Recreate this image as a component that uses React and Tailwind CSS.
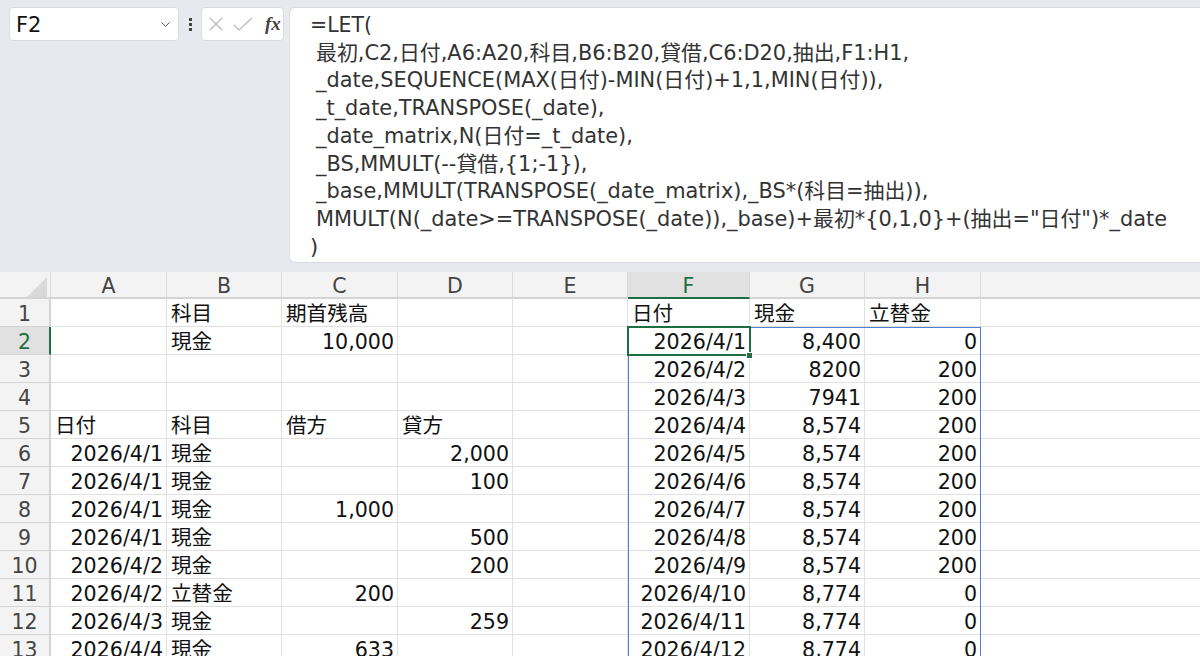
import { ChevronDown } from "lucide-react";

const font = "font-['DejaVu_Sans','Noto_Sans_CJK_JP',sans-serif]";
const columns = ["A", "B", "C", "D", "E", "F", "G", "H"];

const formula = [
  "最初,C2,日付,A6:A20,科目,B6:B20,貸借,C6:D20,抽出,F1:H1,",
  "_date,SEQUENCE(MAX(日付)-MIN(日付)+1,1,MIN(日付)),",
  "_t_date,TRANSPOSE(_date),",
  "_date_matrix,N(日付=_t_date),",
  "_BS,MMULT(--貸借,{1;-1}),",
  "_base,MMULT(TRANSPOSE(_date_matrix),_BS*(科目=抽出)),",
  "MMULT(N(_date>=TRANSPOSE(_date)),_base)+最初*{0,1,0}+(抽出=\"日付\")*_date",
];

// cell = text, or [text] when it is right aligned
const rows = [
  ["", "科目", "期首残高", "", "", "日付", "現金", "立替金"],
  ["", "現金", ["10,000"], "", "", ["2026/4/1"], ["8,400"], ["0"]],
  ["", "", "", "", "", ["2026/4/2"], ["8200"], ["200"]],
  ["", "", "", "", "", ["2026/4/3"], ["7941"], ["200"]],
  ["日付", "科目", "借方", "貸方", "", ["2026/4/4"], ["8,574"], ["200"]],
  [["2026/4/1"], "現金", "", ["2,000"], "", ["2026/4/5"], ["8,574"], ["200"]],
  [["2026/4/1"], "現金", "", ["100"], "", ["2026/4/6"], ["8,574"], ["200"]],
  [["2026/4/1"], "現金", ["1,000"], "", "", ["2026/4/7"], ["8,574"], ["200"]],
  [["2026/4/1"], "現金", "", ["500"], "", ["2026/4/8"], ["8,574"], ["200"]],
  [["2026/4/2"], "現金", "", ["200"], "", ["2026/4/9"], ["8,574"], ["200"]],
  [["2026/4/2"], "立替金", ["200"], "", "", ["2026/4/10"], ["8,774"], ["0"]],
  [["2026/4/3"], "現金", "", ["259"], "", ["2026/4/11"], ["8,774"], ["0"]],
  [["2026/4/4"], "現金", ["633"], "", "", ["2026/4/12"], ["8,774"], ["0"]],
];

const grid = "grid grid-cols-[51px_116px_115px_116px_115px_115px_122px_115px_116px_1fr]";

function Cell({ value }) {
  const right = Array.isArray(value);
  return (
    <div
      className={`h-[28px] border-r border-b border-[#e1e1e1] overflow-hidden whitespace-nowrap text-[20.6px] leading-[31px] text-[#111] ${
        right ? "text-right pr-[3px]" : "pl-[4px]"
      }`}
    >
      {right ? value[0] : value}
    </div>
  );
}

export default function App() {
  return (
    <div className={`${font} h-[656px] w-[1200px] overflow-hidden bg-white`}>
      {/* formula bar */}
      <div className="flex h-[272px] bg-[#e6eaee] pl-[9px] pt-[7px] items-start">
        <div className="flex items-center justify-between h-[34px] w-[170px] bg-white rounded-[4px] border border-[#d9dde1] pl-[6px] pr-[5px] text-[21px] text-[#111]">
          <span className="pt-[3px]">F2</span>
          <ChevronDown size={15} strokeWidth={1.5} className="text-[#444]" />
        </div>
        <div className="flex flex-col gap-[2px] w-[22px] items-center pt-[11px]">
          <span className="w-[3px] h-[3px] bg-[#444]" />
          <span className="w-[3px] h-[3px] bg-[#444]" />
          <span className="w-[3px] h-[3px] bg-[#444]" />
        </div>
        <div className="flex items-center h-[34px] w-[83px] bg-white rounded-[4px] border border-[#d9dde1] pl-[6px] gap-[9px]">
          <svg width="16" height="16" viewBox="0 0 16 16" fill="none" stroke="#b8b8b8" strokeWidth="1.2" className="shrink-0">
            <path d="M2 2l12 12M14 2L2 14" />
          </svg>
          <svg width="20" height="16" viewBox="0 0 20 16" fill="none" stroke="#b8b8b8" strokeWidth="1.2" className="shrink-0">
            <path d="M1 9l5 5L19 2" />
          </svg>
          <span className="font-['Liberation_Serif',serif] italic font-bold text-[19px] leading-none text-[#444] ml-[3px] -mt-[1px]">fx</span>
        </div>
        <div className="ml-[5px] h-[256px] flex-1 bg-white rounded-l-[6px] border border-r-0 border-[#d9dde1] pl-[20px] pt-[4px] text-[20.9px] leading-[27.7px] text-[#333] whitespace-nowrap">
          <div className="text-[20.5px]">=LET(</div>
          {formula.map((line) => (
            <div key={line} className="pl-[6px]">{line}</div>
          ))}
          <div>)</div>
        </div>
      </div>

      {/* sheet */}
      <div className="relative">
        <div className={`${grid} h-[27px] bg-[#f3f3f3] border-b-2 border-[#d2d4d6]`}>
          <div className="relative border-r border-[#d9d9d9]">
            <div className="absolute right-[3px] bottom-[3px] w-0 h-0 border-l-[20px] border-b-[20px] border-l-transparent border-b-[#d9d9d9]" />
          </div>
          {columns.map((c) => (
            <div
              key={c}
              className={`text-center text-[20.5px] leading-[28px] border-r border-[#d9d9d9] ${
                c === "F" ? "bg-[#e1e1e1] text-[#1d6f42] border-b-2 border-b-[#1d6f42] h-[27px]" : "text-[#444]"
              }`}
            >
              {c}
            </div>
          ))}
          <div />
        </div>

        {rows.map((row, r) => (
          <div key={r} className={grid}>
            <div
              className={`h-[28px] text-center text-[20.5px] leading-[31px] border-r-2 border-b border-[#d2d4d6] ${
                r === 1 ? "bg-[#e1e1e1] text-[#1d6f42] border-r-[#1d6f42]" : "bg-[#f3f3f3] text-[#444]"
              }`}
            >
              {r + 1}
            </div>
            {row.map((v, c) => (
              <Cell key={c} value={v} />
            ))}
            <div className="h-[28px] border-b border-[#e1e1e1]" />
          </div>
        ))}

        {/* selected range and active cell */}
        <div className="absolute left-[628px] top-[55px] w-[353px] h-[360px] border border-[#4f81d0]" />
        <div className="absolute left-[627px] top-[54px] w-[124px] h-[30px] border-2 border-[#1d6f42]" />
        <div className="absolute left-[746px] top-[80px] w-[5px] h-[5px] bg-[#1d6f42] border border-white box-content" />
      </div>
    </div>
  );
}
